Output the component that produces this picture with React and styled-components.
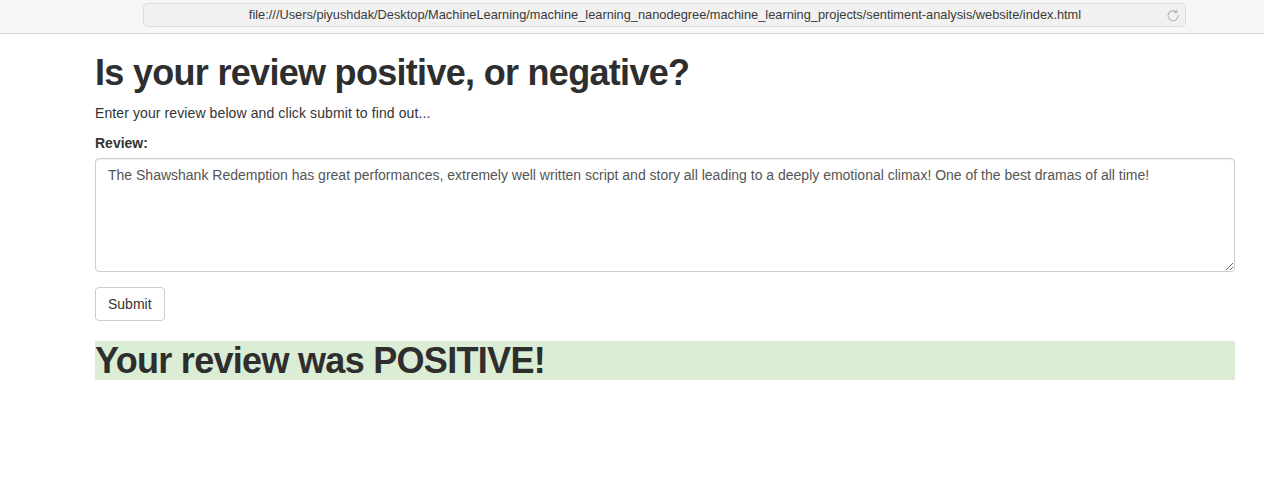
import React from 'react';
import styled, { createGlobalStyle } from 'styled-components';

const reviewText =
  'The Shawshank Redemption has great performances, extremely well written script and story all leading to a deeply emotional climax! One of the best dramas of all time!';

const App = () => {
  return (
    <>
      <GlobalStyle />

      {/* Browser chrome */}
      <StyledToolbar>
        <StyledAddress>
          <StyledUrl>file:///Users/piyushdak/Desktop/MachineLearning/machine_learning_nanodegree/machine_learning_projects/sentiment-analysis/website/index.html</StyledUrl>
          <StyledReload viewBox="0 0 14 14">
            <path d="M10.6 4.2 A5 5 0 1 0 12 7.6" fill="none" stroke="#b5b5b5" strokeWidth="1.1" strokeLinecap="round" />
            <path d="M8.3 4.4 L11 4.4 L11 1.7" fill="none" stroke="#b5b5b5" strokeWidth="1.1" strokeLinecap="round" strokeLinejoin="round" />
          </StyledReload>
        </StyledAddress>
      </StyledToolbar>

      {/* Page */}
      <StyledContainer>
        <StyledTitle>Is your review positive, or negative?</StyledTitle>
        <StyledLead>Enter your review below and click submit to find out...</StyledLead>
        <StyledForm>
          <StyledGroup>
            <StyledLabel htmlFor="review">Review:</StyledLabel>
            <StyledTextarea id="review" rows={5} defaultValue={reviewText} />
          </StyledGroup>
          <StyledButton type="button">Submit</StyledButton>
        </StyledForm>
        <StyledTitle $result>Your review was POSITIVE!</StyledTitle>
      </StyledContainer>
    </>
  );
};

const GlobalStyle = createGlobalStyle`
  * { box-sizing: border-box; }
  body {
    margin: 0;
    background: #fff;
    font-family: "Liberation Sans", Arial, sans-serif;
    font-size: 14px;
    line-height: 20px;
    color: #333;
  }
`;
const StyledToolbar = styled.header`
  height: 34px;
  background: #f6f6f6;
  border-bottom: 1px solid #d4d4d4;
  display: flex;
  padding: 3px 0 0 143px;
`;
const StyledAddress = styled.div`
  position: relative;
  width: 1043px;
  height: 24px;
  border: 1px solid #dcdcdc;
  border-radius: 5px;
  background: #f1f1f1;
  display: flex;
  align-items: center;
  justify-content: center;
`;
const StyledUrl = styled.span`
  font-size: 12.8px;
  color: #3a3a3a;
  margin-left: 1px;
`;
const StyledReload = styled.svg`
  position: absolute;
  right: 5px;
  top: 4px;
  width: 14px;
  height: 14px;
`;
const StyledContainer = styled.main`
  width: 1170px;
  padding: 0 15px;
  margin-left: 80px;
  margin-top: -1px;
`;
const StyledTitle = styled.h1`
  font-size: 36px;
  font-weight: 700;
  line-height: 1.1;
  letter-spacing: -0.7px;
  margin: 20px 0 10px;
  color: #2e2e2e;
  background: ${props => (props.$result ? '#dbedd5' : 'transparent')};
`;
const StyledLead = styled.p`
  margin: 0 0 10px;
  letter-spacing: 0.1px;
`;
const StyledForm = styled.form`
  display: flex;
  flex-direction: column;
  align-items: flex-start;
`;
const StyledGroup = styled.div`
  width: 100%;
  margin-bottom: 15px;
`;
const StyledLabel = styled.label`
  display: block;
  font-weight: 700;
  margin-bottom: 5px;
`;
const StyledTextarea = styled.textarea`
  display: block;
  width: 100%;
  padding: 6px 12px;
  font-family: inherit;
  font-size: 14px;
  line-height: 20px;
  color: #555;
  border: 1px solid #ccc;
  border-radius: 4px;
  box-shadow: inset 0 1px 1px rgba(0, 0, 0, 0.075);
  resize: vertical;
  outline: none;
`;
const StyledButton = styled.button`
  height: 34px;
  padding: 6px 12px;
  font-family: inherit;
  font-size: 14px;
  line-height: 20px;
  color: #333;
  background: #fff;
  border: 1px solid #ccc;
  border-radius: 4px;
`;

export default App;
